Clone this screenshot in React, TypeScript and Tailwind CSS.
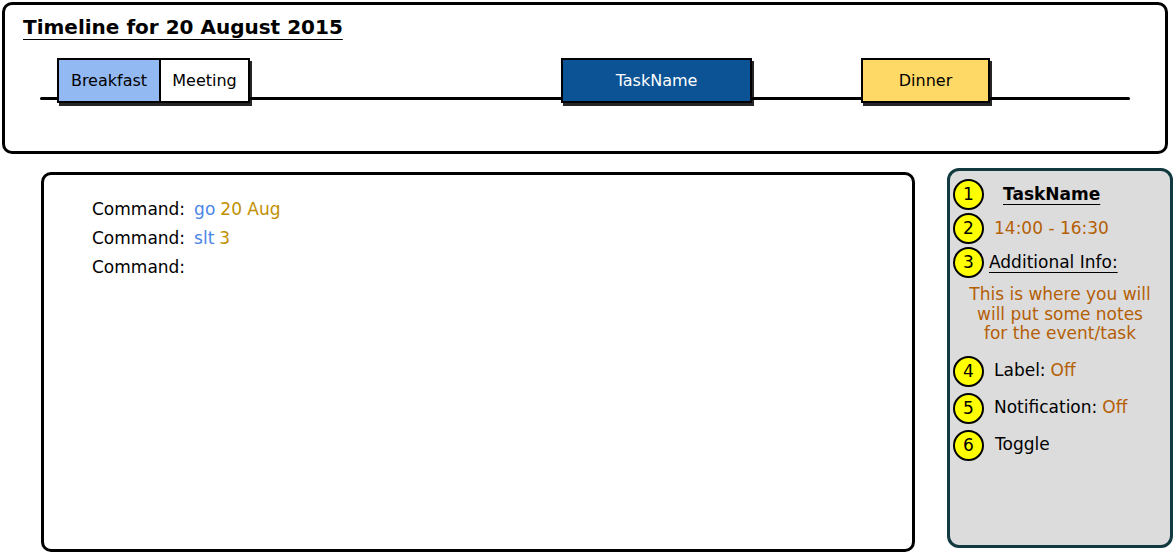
import React from "react";

const font = { fontFamily: "'DejaVu Sans', Verdana, sans-serif" };

function Circle({ n }: { n: number }) {
  return (
    <div className="w-[31px] h-[31px] shrink-0 rounded-full border-2 border-black bg-[#ffff00] flex items-center justify-center text-[17px] leading-none text-black">
      {n}
    </div>
  );
}

export default function App() {
  return (
    <div className="w-[1176px] h-[555px] bg-white overflow-hidden text-black" style={font}>
      {/* Top timeline panel */}
      <div className="ml-[2px] mt-[2px] w-[1166px] h-[152px] border-[3px] border-black rounded-[10px] flex flex-col">
        <div className="pl-[18px] pt-[7px] h-[40px]">
          <span className="text-[20px] font-bold underline decoration-1 underline-offset-[5px]">
            Timeline for 20 August 2015
          </span>
        </div>
        <div className="relative mt-[13px] h-[48px]">
          <div className="absolute left-[35px] w-[1090px] top-[39px] h-[3px] bg-black rounded-full" />
          <div className="relative flex items-start">
            <div className="ml-[52px] w-[104px] h-[45px] bg-[#93b9f2] border-2 border-black flex items-center justify-center text-[16px] shadow-[2px_3px_0_rgba(0,0,0,0.85)]">
              Breakfast
            </div>
            <div className="w-[89px] h-[45px] bg-white border-2 border-l-0 border-black flex items-center justify-center text-[16px] shadow-[2px_3px_0_rgba(0,0,0,0.85)]">
              Meeting
            </div>
            <div className="ml-[311px] w-[191px] h-[45px] bg-[#0b5394] border-2 border-black flex items-center justify-center text-[16px] text-white shadow-[2px_3px_0_rgba(0,0,0,0.85)]">
              TaskName
            </div>
            <div className="ml-[109px] w-[129px] h-[45px] bg-[#ffd966] border-2 border-black flex items-center justify-center text-[16px] shadow-[2px_3px_0_rgba(0,0,0,0.85)]">
              Dinner
            </div>
          </div>
        </div>
      </div>

      {/* Bottom row */}
      <div className="flex items-start mt-[14px]">
        <div className="ml-[41px] mt-[4px] w-[874px] h-[380px] border-[3px] border-black rounded-[10px] pl-[48px] pt-[20px] text-[17px]">
          <div className="h-[29px] flex items-center">
            <span>Command:</span>
            <span className="ml-[9px] text-[#4a86e8]">go</span>
            <span className="ml-[5px] text-[#bf9000]">20 Aug</span>
          </div>
          <div className="h-[29px] flex items-center">
            <span>Command:</span>
            <span className="ml-[9px] text-[#4a86e8]">slt</span>
            <span className="ml-[5px] text-[#bf9000]">3</span>
          </div>
          <div className="h-[29px] flex items-center">
            <span>Command:</span>
          </div>
        </div>

        <div className="ml-[32px] w-[226px] h-[380px] bg-[#dcdcdc] border-[3px] border-[#133a40] rounded-[12px] pl-[3px] pt-[8px] text-[17px]">
          <div className="flex items-center h-[31px]">
            <Circle n={1} />
            <span className="ml-[19px] font-bold underline decoration-1 underline-offset-[4px]">TaskName</span>
          </div>
          <div className="flex items-center h-[31px] mt-[3px]">
            <Circle n={2} />
            <span className="ml-[10px] text-[#b45f06]">14:00 - 16:30</span>
          </div>
          <div className="flex items-center h-[31px] mt-[3px]">
            <Circle n={3} />
            <span className="ml-[5px] underline decoration-1 underline-offset-[4px]">Additional Info:</span>
          </div>
          <div className="mt-[7px] text-center text-[#b45f06] leading-[19.5px] pr-[3px]">
            This is where you will
            <br />
            will put some notes
            <br />
            for the event/task
          </div>
          <div className="flex items-center h-[31px] mt-[12px]">
            <Circle n={4} />
            <span className="ml-[10px]">Label: </span>
            <span className="ml-[5px] text-[#b45f06]">Off</span>
          </div>
          <div className="flex items-center h-[31px] mt-[6px]">
            <Circle n={5} />
            <span className="ml-[10px]">Notification:</span>
            <span className="ml-[5px] text-[#b45f06]">Off</span>
          </div>
          <div className="flex items-center h-[31px] mt-[6px]">
            <Circle n={6} />
            <span className="ml-[11px]">Toggle</span>
          </div>
        </div>
      </div>
    </div>
  );
}
